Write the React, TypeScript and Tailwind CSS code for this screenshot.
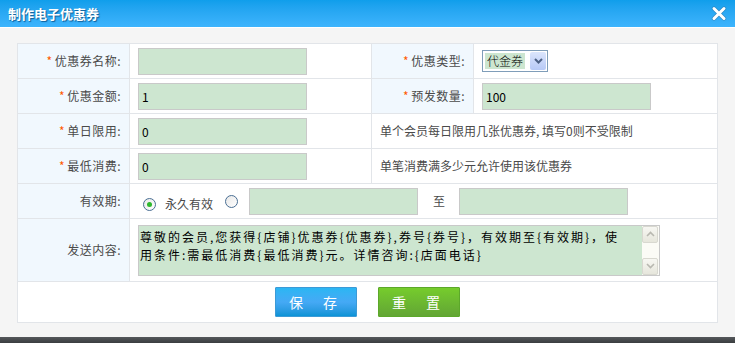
import { useState } from "react"

const cjk = "font-['Noto_Sans_CJK_SC','Noto_Sans',sans-serif]"

function Star() {
  return <span className="mr-[2px] text-[#ff5a00]">*</span>
}

function Label({ text, required }: { text: string; required?: boolean }) {
  return (
    <td className="border border-[#e2e5e9] bg-[#f1f8fe] pr-[8px] text-right text-[12px] tracking-[0.5px] text-[#4a4a4a]">
      {required && <Star />}
      {text}:
    </td>
  )
}

function Field({ value = "", w = "w-[169px]" }: { value?: string; w?: string }) {
  return (
    <input
      readOnly
      value={value}
      className={`${w} h-[27px] border border-[#c9c9c9] bg-[#cde6d0] px-[3px] text-[12px] text-black outline-none`}
    />
  )
}

function Radio({ checked }: { checked?: boolean }) {
  return (
    <span className="inline-flex h-[13px] w-[13px] items-center justify-center rounded-full border border-[#4a6f94] bg-gradient-to-br from-[#e8e8e8] to-white">
      {checked && <span className="h-[5px] w-[5px] rounded-full bg-[#2eb82e]" />}
    </span>
  )
}

function ScrollBtn({ up }: { up?: boolean }) {
  return (
    <div className="flex h-[17px] w-[16px] items-center justify-center rounded-[2px] border border-[#d8d8d0] bg-gradient-to-b from-[#f7f7f2] to-[#e6e6dc]">
      <svg width="9" height="6" viewBox="0 0 9 6">
        <path d={up ? "M1 5 L4.5 1.5 L8 5" : "M1 1 L4.5 4.5 L8 1"} fill="none" stroke="#b8b8b0" strokeWidth="1.6" />
      </svg>
    </div>
  )
}

export default function App() {
  const [content] = useState(
    "尊敬的会员,您获得{店铺}优惠券{优惠券},券号{券号}，有效期至{有效期}，使用条件:需最低消费{最低消费}元。详情咨询:{店面电话}"
  )

  return (
    <div className={`flex h-[343px] w-[735px] flex-col bg-[#f5f5f5] ${cjk}`}>
      <div className="flex h-[27px] items-center justify-between bg-gradient-to-b from-[#0f9eeb] to-[#3db4fd] pl-[8px] pr-[8px]">
        <span className="text-[13px] font-bold text-white [text-shadow:1px_1px_1px_rgba(0,60,110,0.7)]">制作电子优惠券</span>
        <svg width="16" height="15" viewBox="0 0 16 15">
          <path d="M3 2.5 L13 12.5 M13 2.5 L3 12.5" stroke="#3a5a78" strokeWidth="4.4" strokeLinecap="round" opacity="0.35" />
          <path d="M3 2.5 L13 12.5 M13 2.5 L3 12.5" stroke="#fff" strokeWidth="3" strokeLinecap="round" />
        </svg>
      </div>
      <div className="h-[1px] bg-white" />
      <div className="flex-1 pl-[17px] pt-[15px]">
        <table className="w-[700px] table-fixed border-collapse bg-white">
          <colgroup>
            <col className="w-[112px]" />
            <col className="w-[242px]" />
            <col className="w-[102px]" />
            <col className="w-[244px]" />
          </colgroup>
          <tbody>
            <tr className="h-[35px]">
              <Label text="优惠券名称" required />
              <td className="border border-[#e2e5e9] pl-[8px]">
                <Field />
              </td>
              <Label text="优惠类型" required />
              <td className="border border-[#e2e5e9] pl-[8px]">
                <div className="flex h-[22px] w-[66px] items-center border border-[#7f9db9] bg-white pl-[2px]">
                  <span className="bg-[#cde6d0] px-[2px] text-[12px] font-light leading-[16px] text-black">代金券</span>
                  <span className="ml-auto mr-[1px] flex h-[18px] w-[16px] items-center justify-center rounded-[2px] bg-gradient-to-b from-[#dbe5fc] to-[#b7c9f6]">
                    <svg width="9" height="6" viewBox="0 0 9 6">
                      <path d="M1 1 L4.5 4.5 L8 1" fill="none" stroke="#4d6185" strokeWidth="2" />
                    </svg>
                  </span>
                </div>
              </td>
            </tr>
            <tr className="h-[35px]">
              <Label text="优惠金额" required />
              <td className="border border-[#e2e5e9] pl-[8px]">
                <Field value="1" />
              </td>
              <Label text="预发数量" required />
              <td className="border border-[#e2e5e9] pl-[8px]">
                <Field value="100" />
              </td>
            </tr>
            <tr className="h-[35px]">
              <Label text="单日限用" required />
              <td className="border border-[#e2e5e9] pl-[8px]">
                <Field value="0" />
              </td>
              <td colSpan={2} className="border border-[#e2e5e9] pl-[8px] text-[12px] text-[#4a4a4a]">
                单个会员每日限用几张优惠券, 填写0则不受限制
              </td>
            </tr>
            <tr className="h-[35px]">
              <Label text="最低消费" required />
              <td className="border border-[#e2e5e9] pl-[8px]">
                <Field value="0" />
              </td>
              <td colSpan={2} className="border border-[#e2e5e9] pl-[8px] text-[12px] text-[#4a4a4a]">
                单笔消费满多少元允许使用该优惠券
              </td>
            </tr>
            <tr className="h-[35px]">
              <Label text="有效期" />
              <td colSpan={3} className="border border-[#e2e5e9] pl-[13px]">
                <div className="flex items-center text-[12px] text-[#4a4a4a]">
                  <span className="mt-[6px] flex">
                    <Radio checked />
                  </span>
                  <span className="ml-[9px] mt-[6px]">永久有效</span>
                  <span className="ml-[12px] mt-0 flex">
                    <Radio />
                  </span>
                  <span className="ml-[11px] flex">
                    <Field />
                  </span>
                  <span className="ml-[15px] mr-[14px]">至</span>
                  <Field />
                </div>
              </td>
            </tr>
            <tr className="h-[63px]">
              <Label text="发送内容" />
              <td colSpan={3} className="border border-[#e2e5e9] pl-[8px]">
                <div className="flex h-[51px] w-[522px] border border-[#c9c9c9] bg-[#cde6d0]">
                  <textarea
                    readOnly
                    value={content}
                    className="h-full flex-1 resize-none overflow-hidden bg-transparent py-[2px] pl-[1px] pr-[12px] text-[12px] leading-[18px] tracking-[2px] text-black outline-none"
                  />
                  <div className="flex w-[17px] flex-col justify-between bg-[#fbfbf6]">
                    <ScrollBtn up />
                    <ScrollBtn />
                  </div>
                </div>
              </td>
            </tr>
            <tr className="h-[41px]">
              <td colSpan={4} className="border border-[#e2e5e9]">
                <div className="flex items-center justify-center gap-[21px]">
                  <button className="h-[30px] w-[82px] whitespace-nowrap rounded-[1px] border border-[#3c9ad6] bg-gradient-to-b from-[#2ab6f3] via-[#45a9f5] to-[#0993d6] pl-[13px] text-left text-[14px] tracking-[20px] text-white">
                    保存
                  </button>
                  <button className="h-[30px] w-[82px] whitespace-nowrap rounded-[1px] border border-[#5ca82a] bg-gradient-to-b from-[#76cc2c] to-[#62a534] pl-[13px] text-left text-[14px] tracking-[20px] text-white">
                    重置
                  </button>
                </div>
              </td>
            </tr>
          </tbody>
        </table>
      </div>
      <div className="h-[6px] bg-gradient-to-b from-[#55585b] to-[#3a3d40]" />
    </div>
  )
}
